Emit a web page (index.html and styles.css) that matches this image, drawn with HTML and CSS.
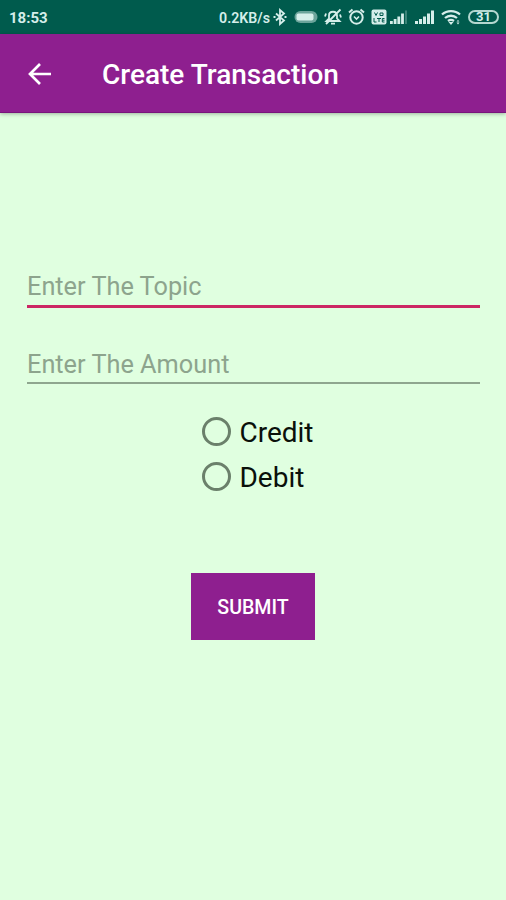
FILE: index.html
```html
<!DOCTYPE html>
<html lang="en">
<head>
  <meta charset="UTF-8" />
  <meta name="viewport" content="width=device-width, initial-scale=1.0">
  <title>Create Transaction</title>
  <link rel="stylesheet" href="styles.css">
</head>
<body>
  <header class="status-bar">
    <span class="time">18:53</span>
    <div class="status-icons">
      <span class="speed">0.2KB/s</span>
      <!-- bluetooth -->
      <svg width="14" height="18" viewBox="0 0 14 18" fill="none" stroke="currentColor" stroke-width="1.8">
        <path d="M3 5.5l8 7-4 3.5V2l4 3.5-8 7M.5 9h2M11.5 9h2" />
      </svg>
      <!-- capsule -->
      <svg class="capsule" width="24" height="18" viewBox="0 0 24 18">
        <rect x=".5" y="3" width="23" height="12" rx="6" fill="currentColor" opacity=".5" />
        <rect x="2.5" y="5.5" width="17" height="7" rx="2" fill="currentColor" />
      </svg>
      <!-- muted bell -->
      <svg class="bell" width="18" height="18" viewBox="0 0 18 18" fill="none" stroke="currentColor" stroke-width="1.8">
        <path d="M2.5 13h13L13 10.5v-3c0-5-8-5-8 0v3zM7 15.7h4M2 16L16.5 1.5M1 8.5l1-3M17 9.5l-1-3" />
      </svg>
      <!-- alarm -->
      <svg class="alarm" width="17" height="18" viewBox="0 0 17 18" fill="none" stroke="currentColor" stroke-width="2">
        <circle cx="8.5" cy="9.5" r="6.2" />
        <path d="M1 4.5l3.5-3M16 4.5l-3.5-3" />
        <path d="M6 8.5l2.5 2.5L11 8.5" stroke-width="1.6" />
      </svg>
      <!-- volte -->
      <svg class="volte" width="16" height="18" viewBox="0 0 16 18">
        <rect x=".5" y="1.5" width="15" height="15" rx="2" fill="currentColor" />
        <path d="M3.5 4.5l1.5 3 1.5-3M9 5h3v2.5H9zM3 10v4h2.5M6 10.5h4M8 10.5V14M13.5 10.5h-2.2V14h2.2M11.5 12.2h2" fill="none" stroke="#005b4d" stroke-width="1" />
      </svg>
      <!-- signal -->
      <svg class="signal" width="18" height="18" viewBox="0 0 18 18" fill="currentColor">
        <path d="M0 13h2.8v3H0zM3.7 11h2.8v5H3.7zM7.4 8.5h2.8V16H7.4zM11.1 5.5h2.8V16h-2.8z" />
        <path d="M15.2 2.5h1.6V16h-1.6z" opacity=".35" />
      </svg>
      <svg class="signal-two" width="20" height="18" viewBox="0 0 20 18" fill="currentColor">
        <path d="M0 13h3v3H0zM4 11h3v5H4zM8 8.5h3V16H8zM12 5.5h3V16h-3zM16 2.5h3V16h-3z" />
      </svg>
      <!-- wifi -->
      <svg class="wifi" width="20" height="18" viewBox="0 0 20 18" fill="none" stroke="currentColor" stroke-width="2.3">
        <path d="M1 6.5c5-4.5 13-4.5 18 0M4 10c3.5-3 8.5-3 12 0M7 13c2-1.5 4-1.5 6 0" />
        <path d="M7.5 14h5L10 17zM15.5 13.5l1.5-1.5 1.5 1.5zM15.5 14.5h3L17 16.5z" fill="currentColor" stroke="none" />
      </svg>
      <div class="battery"><span class="battery-level">31</span></div>
    </div>
  </header>

  <div class="toolbar">
    <svg class="back" width="24" height="24" viewBox="0 0 24 24" fill="none" stroke="currentColor" stroke-width="2.7">
      <path d="M24 12H3M13 2L3 12l10 10" />
    </svg>
    <h1>Create Transaction</h1>
  </div>

  <form class="form">
    <input class="field active" type="text" placeholder="Enter The Topic" />
    <input class="field" type="text" placeholder="Enter The Amount" />

    <div class="radio-group">
      <label class="radio"><input type="radio" name="type" value="credit" />Credit</label>
      <label class="radio"><input type="radio" name="type" value="debit" />Debit</label>
    </div>

    <button class="submit" type="button">SUBMIT</button>
  </form>
</body>
</html>
```
FILE: styles.css
```css
* {
  box-sizing: border-box;
  font-family: Roboto, sans-serif;
}

body {
  margin: 0;
  min-height: 900px;
  background-color: #e0ffe0;
  color: #0a100a;
}

.status-bar {
  display: flex;
  justify-content: space-between;
  align-items: center;
  height: 34px;
  padding: 0 7px 0 9px;
  background: #005b4d;
  color: #d5eeea;
}

.time {
  margin-top: 1px;
  font-size: 15px;
  font-weight: 700;
  line-height: 18px;
}

.status-icons {
  display: flex;
  align-items: center;
}

.speed {
  margin: 1px 3px 0 0;
  font-size: 14.2px;
  font-weight: 600;
  line-height: 18px;
}

.capsule {
  margin-left: 7px;
}

.bell {
  margin-left: 6px;
}

.alarm {
  margin-left: 6px;
}

.volte {
  margin-left: 6px;
}

.signal {
  margin-left: 3px;
}

.signal-two {
  margin-left: 7px;
}

.wifi {
  margin-left: 6px;
}

.battery {
  display: flex;
  justify-content: center;
  align-items: center;
  width: 31px;
  height: 14px;
  margin-left: 7px;
  border: 2px solid #b4d8d0;
  border-radius: 7px;
}

.battery-level {
  font-size: 13px;
  font-weight: 700;
  line-height: 12px;
}

.toolbar {
  display: flex;
  align-items: center;
  height: 79px;
  padding-left: 27px;
  background: #8e1f8f;
  border-bottom: 1px solid #79147c;
  color: #fff;
  box-shadow: 0 1px 4px rgba(0, 0, 0, 0.3);
}

.back {
  margin-top: 1px;
}

.toolbar h1 {
  margin: 3px 0 0 51px;
  font-size: 28px;
  font-weight: 500;
  line-height: 32px;
}

.form {
  display: flex;
  flex-direction: column;
  align-items: center;
  padding: 153px 26px 0 27px;
}

.field {
  width: 100%;
  height: 41px;
  margin-bottom: 35px;
  padding: 4px 0 0;
  border: none;
  border-bottom: 2px solid #8fa68f;
  border-radius: 0;
  background: transparent;
  font-size: 25.3px;
  outline: none;
}

.field.active {
  height: 42px;
  padding-top: 2px;
  border-bottom: 3px solid #cc2764;
}

.field::placeholder {
  color: #8da48d;
  opacity: 1;
}

.radio-group {
  display: flex;
  flex-direction: column;
  margin: -9px 0 0 9px;
}

.radio {
  display: flex;
  align-items: center;
  height: 45px;
  font-size: 28px;
}

.radio input {
  appearance: none;
  width: 29px;
  height: 29px;
  margin: 0 8px 2px 0;
  border: 3px solid #6b806b;
  border-radius: 50%;
}

.submit {
  width: 124px;
  height: 67px;
  margin: 73px 1px 0 0;
  padding: 2px 0 0;
  border: none;
  background: #8e1f8f;
  color: #fff;
  font-size: 19.6px;
  font-weight: 500;
}
```
